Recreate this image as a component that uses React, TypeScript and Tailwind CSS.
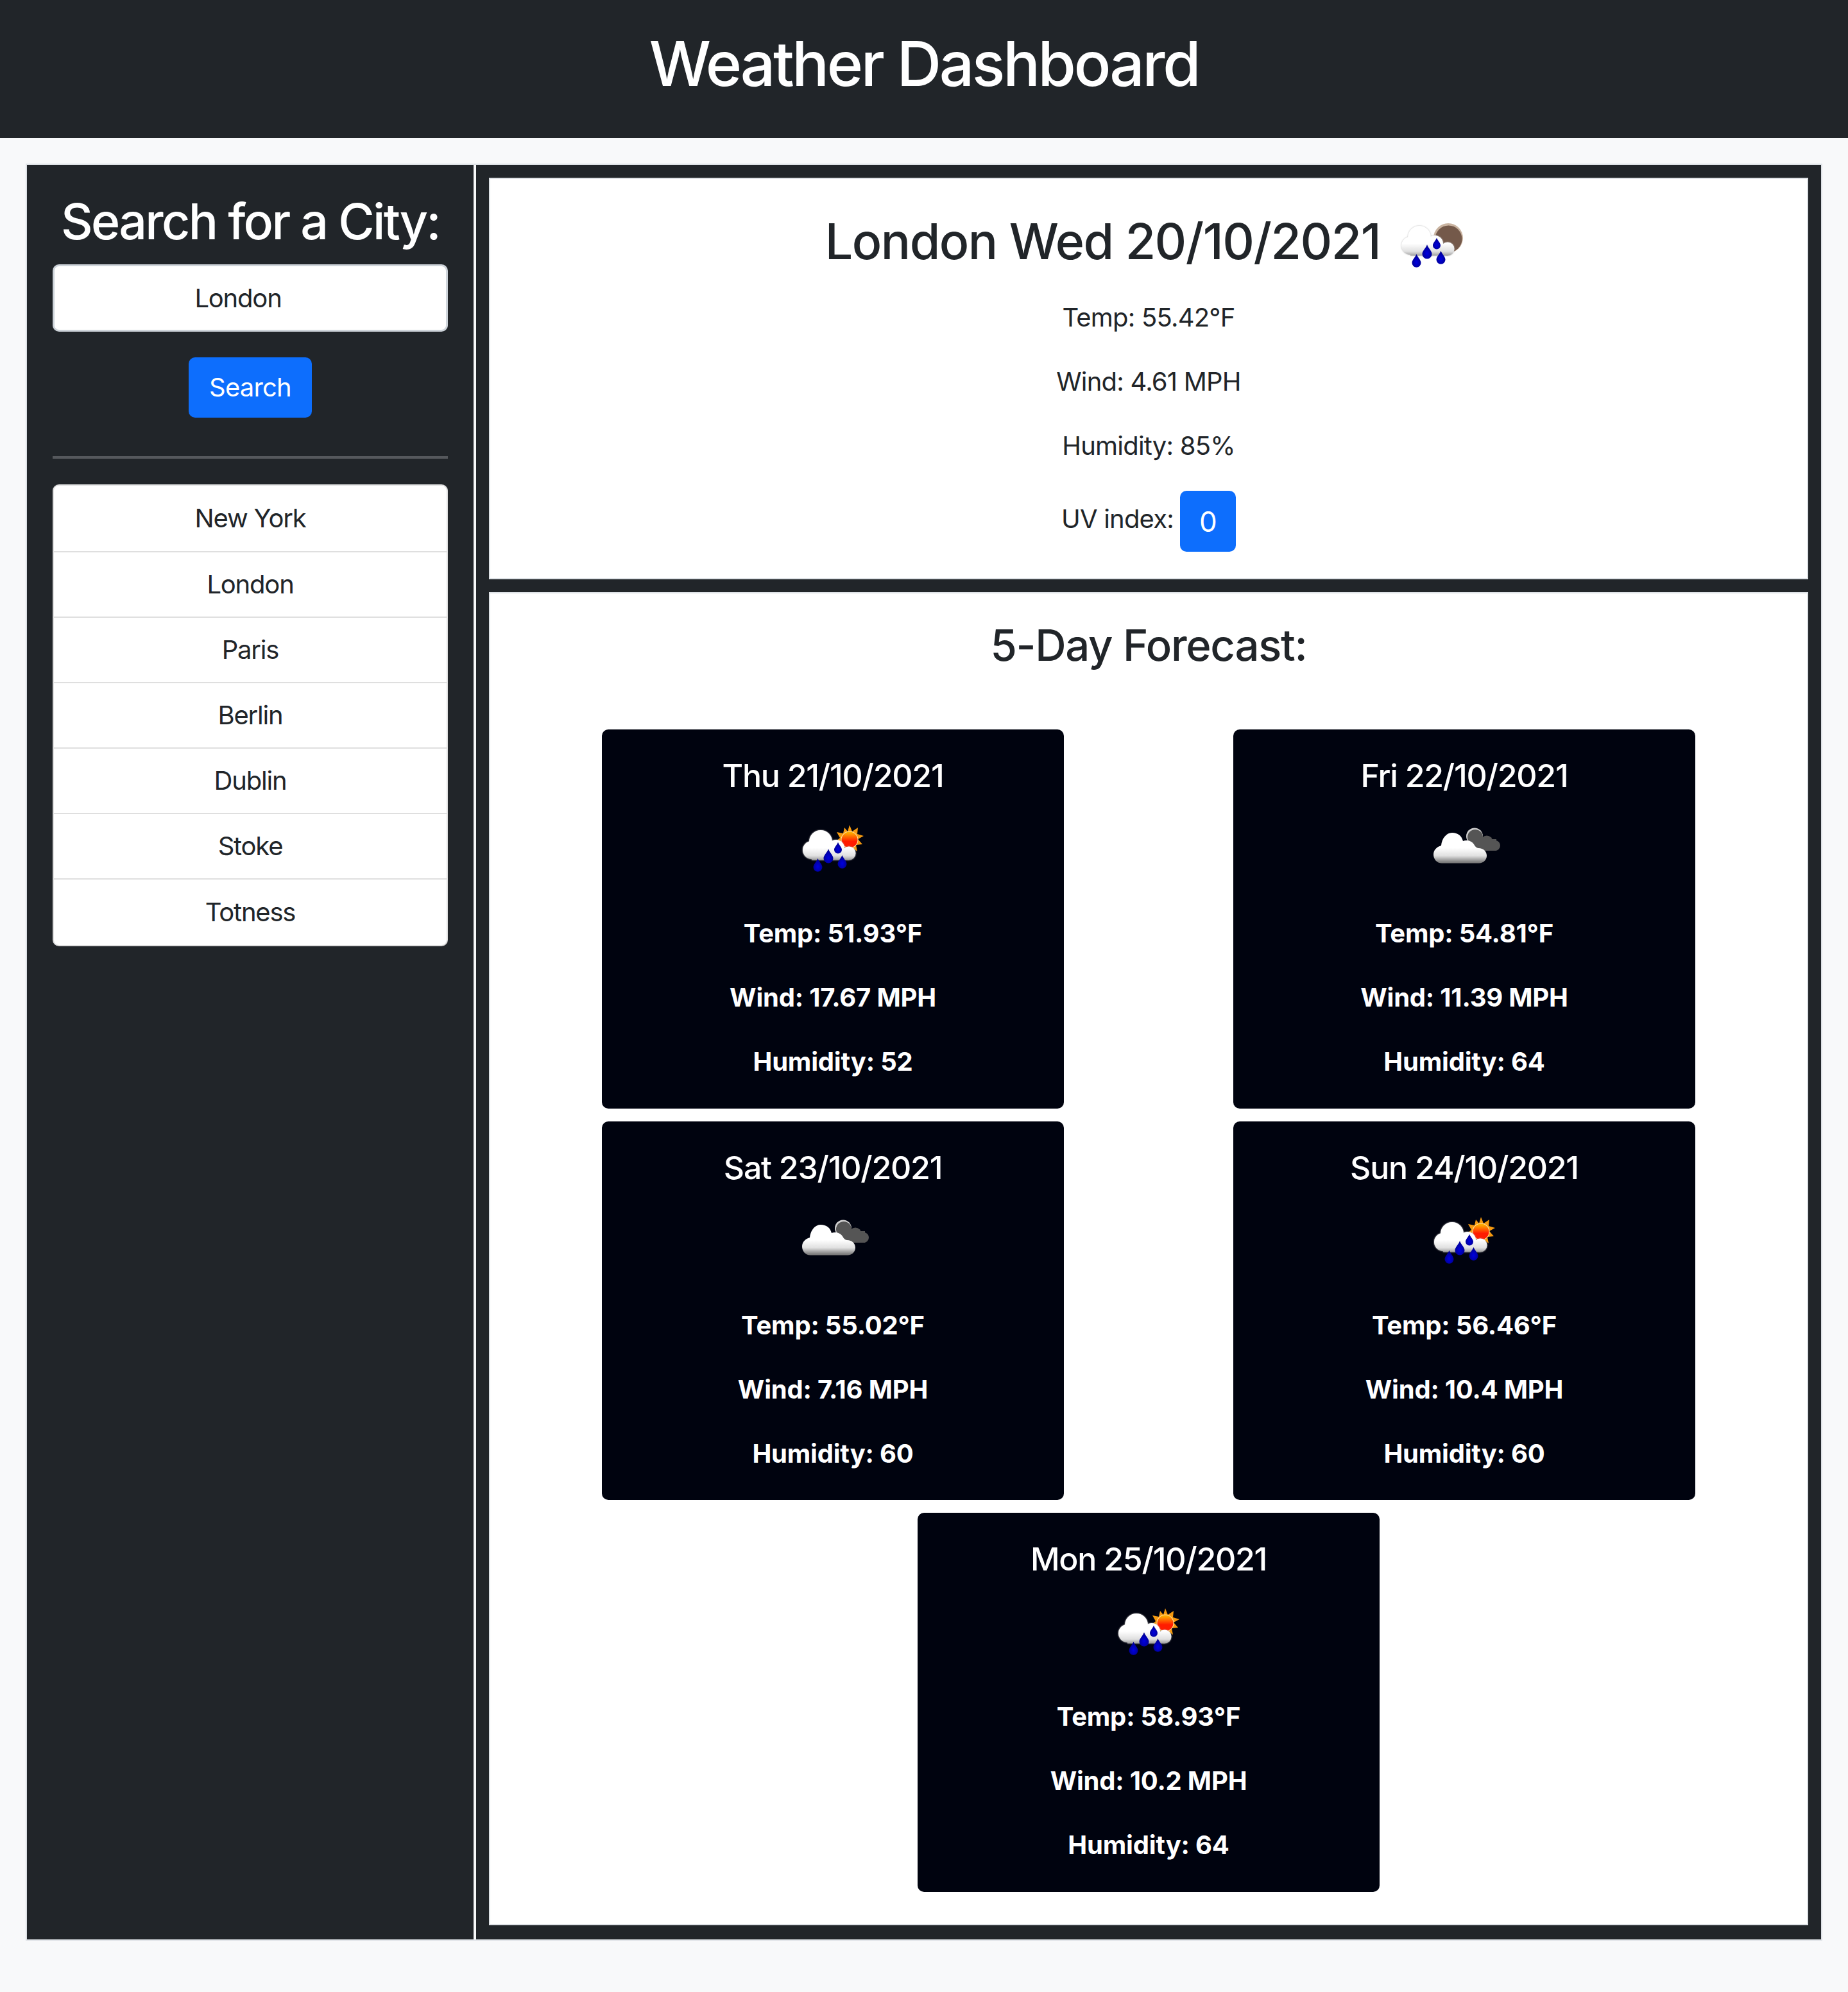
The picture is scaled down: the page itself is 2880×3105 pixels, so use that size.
import React from "react";

type IconKind = "rain-sun" | "rain-moon" | "cloud";

const CITIES = ["New York", "London", "Paris", "Berlin", "Dublin", "Stoke", "Totness"];

const FORECAST: { date: string; icon: IconKind; temp: string; wind: string; humidity: string }[] = [
  { date: "Thu 21/10/2021", icon: "rain-sun", temp: "51.93", wind: "17.67", humidity: "52" },
  { date: "Fri 22/10/2021", icon: "cloud", temp: "54.81", wind: "11.39", humidity: "64" },
  { date: "Sat 23/10/2021", icon: "cloud", temp: "55.02", wind: "7.16", humidity: "60" },
  { date: "Sun 24/10/2021", icon: "rain-sun", temp: "56.46", wind: "10.4", humidity: "60" },
  { date: "Mon 25/10/2021", icon: "rain-sun", temp: "58.93", wind: "10.2", humidity: "64" },
];

function Drop({ x, y, s }: { x: number; y: number; s: number }) {
  return (
    <path
      d={`M${x} ${y - 1.7 * s} C${x + 0.3 * s} ${y - 0.9 * s} ${x + s} ${y - 0.4 * s} ${x + s} ${y + 0.25 * s} A${s} ${s} 0 1 1 ${x - s} ${y + 0.25 * s} C${x - s} ${y - 0.4 * s} ${x - 0.3 * s} ${y - 0.9 * s} ${x} ${y - 1.7 * s}Z`}
      fill="url(#dropFill)"
    />
  );
}

function RainCloud() {
  return (
    <>
      <g fill="url(#cloudFill)" className="drop-shadow-[0_0_1px_#bbbbbb]">
        <circle cx="43" cy="52" r="18" />
        <circle cx="29" cy="65" r="14" />
        <circle cx="67" cy="62" r="13" />
        <circle cx="87" cy="70" r="10.5" />
        <rect x="29" y="62" width="58" height="18.5" />
      </g>
      <Drop x={55} y={76} s={7.5} />
      <Drop x={38.5} y={90} s={7} />
      <Drop x={76.5} y={85} s={7} />
      <Drop x={70} y={63} s={6} />
    </>
  );
}

function WeatherIcon({ kind, className }: { kind: IconKind; className?: string }) {
  return (
    <svg viewBox="0 0 125 125" className={`h-[125px] w-[125px] shrink-0 blur-[0.6px] ${className ?? ""}`}>
      <defs>
        <linearGradient id="cloudFill" gradientUnits="userSpaceOnUse" x1="0" y1="34" x2="0" y2="84">
          <stop offset="0.55" stopColor="#ffffff" />
          <stop offset="0.8" stopColor="#e0e0e0" />
          <stop offset="1" stopColor="#7c7c7c" />
        </linearGradient>
        <linearGradient id="sunFill" x1="0" y1="0" x2="0" y2="1">
          <stop offset="0.05" stopColor="#ffb000" />
          <stop offset="0.6" stopColor="#ff1c00" />
        </linearGradient>
        <radialGradient id="dropFill" cx="0.5" cy="0.62" r="0.55">
          <stop offset="0" stopColor="#0000e0" />
          <stop offset="1" stopColor="#000090" />
        </radialGradient>
      </defs>
      {kind === "rain-sun" && (
        <>
          <polygon
            fill="#f59a10"
            points="88,26 92,36 101,30 100,40 110,43 101,48 108,56 98,57 100,67 91,61 86,70 83,60 74,64 75,54 66,52 73,46 68,37 78,39 80,30 85,36"
          />
          <circle cx="88" cy="49" r="13.5" fill="#ffe0a0" />
          <circle cx="88" cy="49" r="12.5" fill="url(#sunFill)" />
          <RainCloud />
        </>
      )}
      {kind === "rain-moon" && (
        <>
          <circle cx="88" cy="53" r="23" fill="#c9b3a0" />
          <circle cx="88.5" cy="54.5" r="21" fill="#74594a" />
          <RainCloud />
        </>
      )}
      {kind === "cloud" && (
        <>
          <circle cx="78" cy="43.5" r="13" fill="#d0d0d0" />
          <g fill="#555555">
            <circle cx="79" cy="45" r="12" />
            <circle cx="97" cy="52" r="9.5" />
            <circle cx="110" cy="58" r="8" />
            <rect x="70" y="48" width="42" height="18" />
          </g>
          <path
            d="M27 85.5 C19 85.5 14 79 14 72 C14 65 19 60 26 58 C27 47 34 38 43 38 C52 38 58 43 60 51 C65 49 73 50 77 56 C79 60 81 61.5 84 62 C92 62 97 67 97 74 C97 80 92 85.5 85 85.5Z"
            fill="url(#cloudFill)"
          />
        </>
      )}
    </svg>
  );
}

function ForecastCard({ day }: { day: (typeof FORECAST)[number] }) {
  return (
    <div className="flex h-[590.5px] w-[720px] flex-col items-center rounded-[10px] bg-[#00030f] pt-[40px] text-white">
      <h4 className="h-[72px] text-[50px] leading-[64px] font-medium tracking-[-0.025em]">{day.date}</h4>
      <WeatherIcon kind={day.icon} className="mt-[11px] mb-[40px]" />
      <div className="flex flex-col gap-[40px] text-[40px] leading-[60px] font-bold tracking-[-0.005em]">
        <p className="text-center">Temp: {day.temp}°F</p>
        <p className="text-center">Wind: {day.wind} MPH</p>
        <p className="text-center">Humidity: {day.humidity}</p>
      </div>
    </div>
  );
}

export default function App() {
  return (
    <div className="min-h-[3105px] bg-[#f8f9fa] font-['Inter',sans-serif] text-[#212529]">
      <header className="flex h-[215px] items-center justify-center bg-[#212529] pb-[18px] text-white">
        <h1 className="text-[96px] leading-[120px] font-medium tracking-[-0.035em]">Weather Dashboard</h1>
      </header>

      <div className="mx-[40px] mt-[40px] flex h-[2770px] border-2 border-[#dee2e6]">
        <aside className="flex w-[696px] shrink-0 flex-col bg-[#212529] px-[40px] pt-[40px]">
          <h2 className="h-[96px] text-center text-[77px] leading-[96px] font-medium tracking-[-0.035em] whitespace-nowrap text-white">
            Search for a City:
          </h2>
          <input
            readOnly
            value="London"
            className="mt-[19px] h-[105px] w-full rounded-[10px] border-[3px] border-[#ced4da] bg-white pr-[68px] pl-[30px] text-center text-[40px] leading-[60px] tracking-[-0.03em] text-[#212529] outline-none"
          />
          <button className="mx-auto mt-[40px] h-[94px] w-[192px] rounded-[10px] bg-[#0d6efd] text-[40px] leading-[60px] tracking-[-0.02em] text-white">
            Search
          </button>
          <hr className="mt-[60px] h-[4px] border-0 bg-[#55585c]" />
          <ul className="mt-[40px] flex h-[720px] flex-col overflow-hidden rounded-[10px] border-2 border-[#dfdfdf] bg-white">
            {CITIES.map((city, i) => (
              <li
                key={city}
                className={`flex items-center justify-center text-[40px] leading-[60px] tracking-[-0.03em] ${
                  i > 0 ? "border-t-[2.5px] border-[#dfdfdf]" : ""
                } ${i === CITIES.length - 1 ? "flex-1" : "h-[102px]"}`}
              >
                {city}
              </li>
            ))}
          </ul>
        </aside>

        <main className="ml-[4px] flex min-w-0 flex-1 flex-col gap-[20px] bg-[#212529] px-[20px] pt-[20px] pb-[22px]">
          <section className="h-[626px] border-2 border-[#dee2e6] bg-white pt-[49px]">
            <div className="flex h-[96px] items-center justify-center gap-[18px]">
              <h2 className="text-[77px] leading-[96px] font-medium tracking-[-0.019em] whitespace-nowrap">
                London Wed 20/10/2021
              </h2>
              <WeatherIcon kind="rain-moon" className="mt-[9px]" />
            </div>
            <div className="mt-[41px] flex flex-col items-center gap-[40px] text-[40px] leading-[60px] tracking-[-0.02em]">
              <p>Temp: 55.42°F</p>
              <p>Wind: 4.61 MPH</p>
              <p>Humidity: 85%</p>
              <div className="flex items-start gap-[10px]">
                <p className="mt-[14px]">UV index:</p>
                <span className="flex h-[95px] w-[87px] items-center justify-center rounded-[10px] bg-[#0d6efd] text-[44px] text-white">
                  0
                </span>
              </div>
            </div>
          </section>

          <section className="flex-1 border-2 border-[#dee2e6] bg-white pt-[39px]">
            <h3 className="h-[84px] text-center text-[67px] leading-[84px] font-medium tracking-[-0.019em]">
              5-Day Forecast:
            </h3>
            <div className="mt-[89px] flex flex-wrap justify-center gap-x-[264px] gap-y-[20px]">
              {FORECAST.map((day) => (
                <ForecastCard key={day.date} day={day} />
              ))}
            </div>
          </section>
        </main>
      </div>
    </div>
  );
}
